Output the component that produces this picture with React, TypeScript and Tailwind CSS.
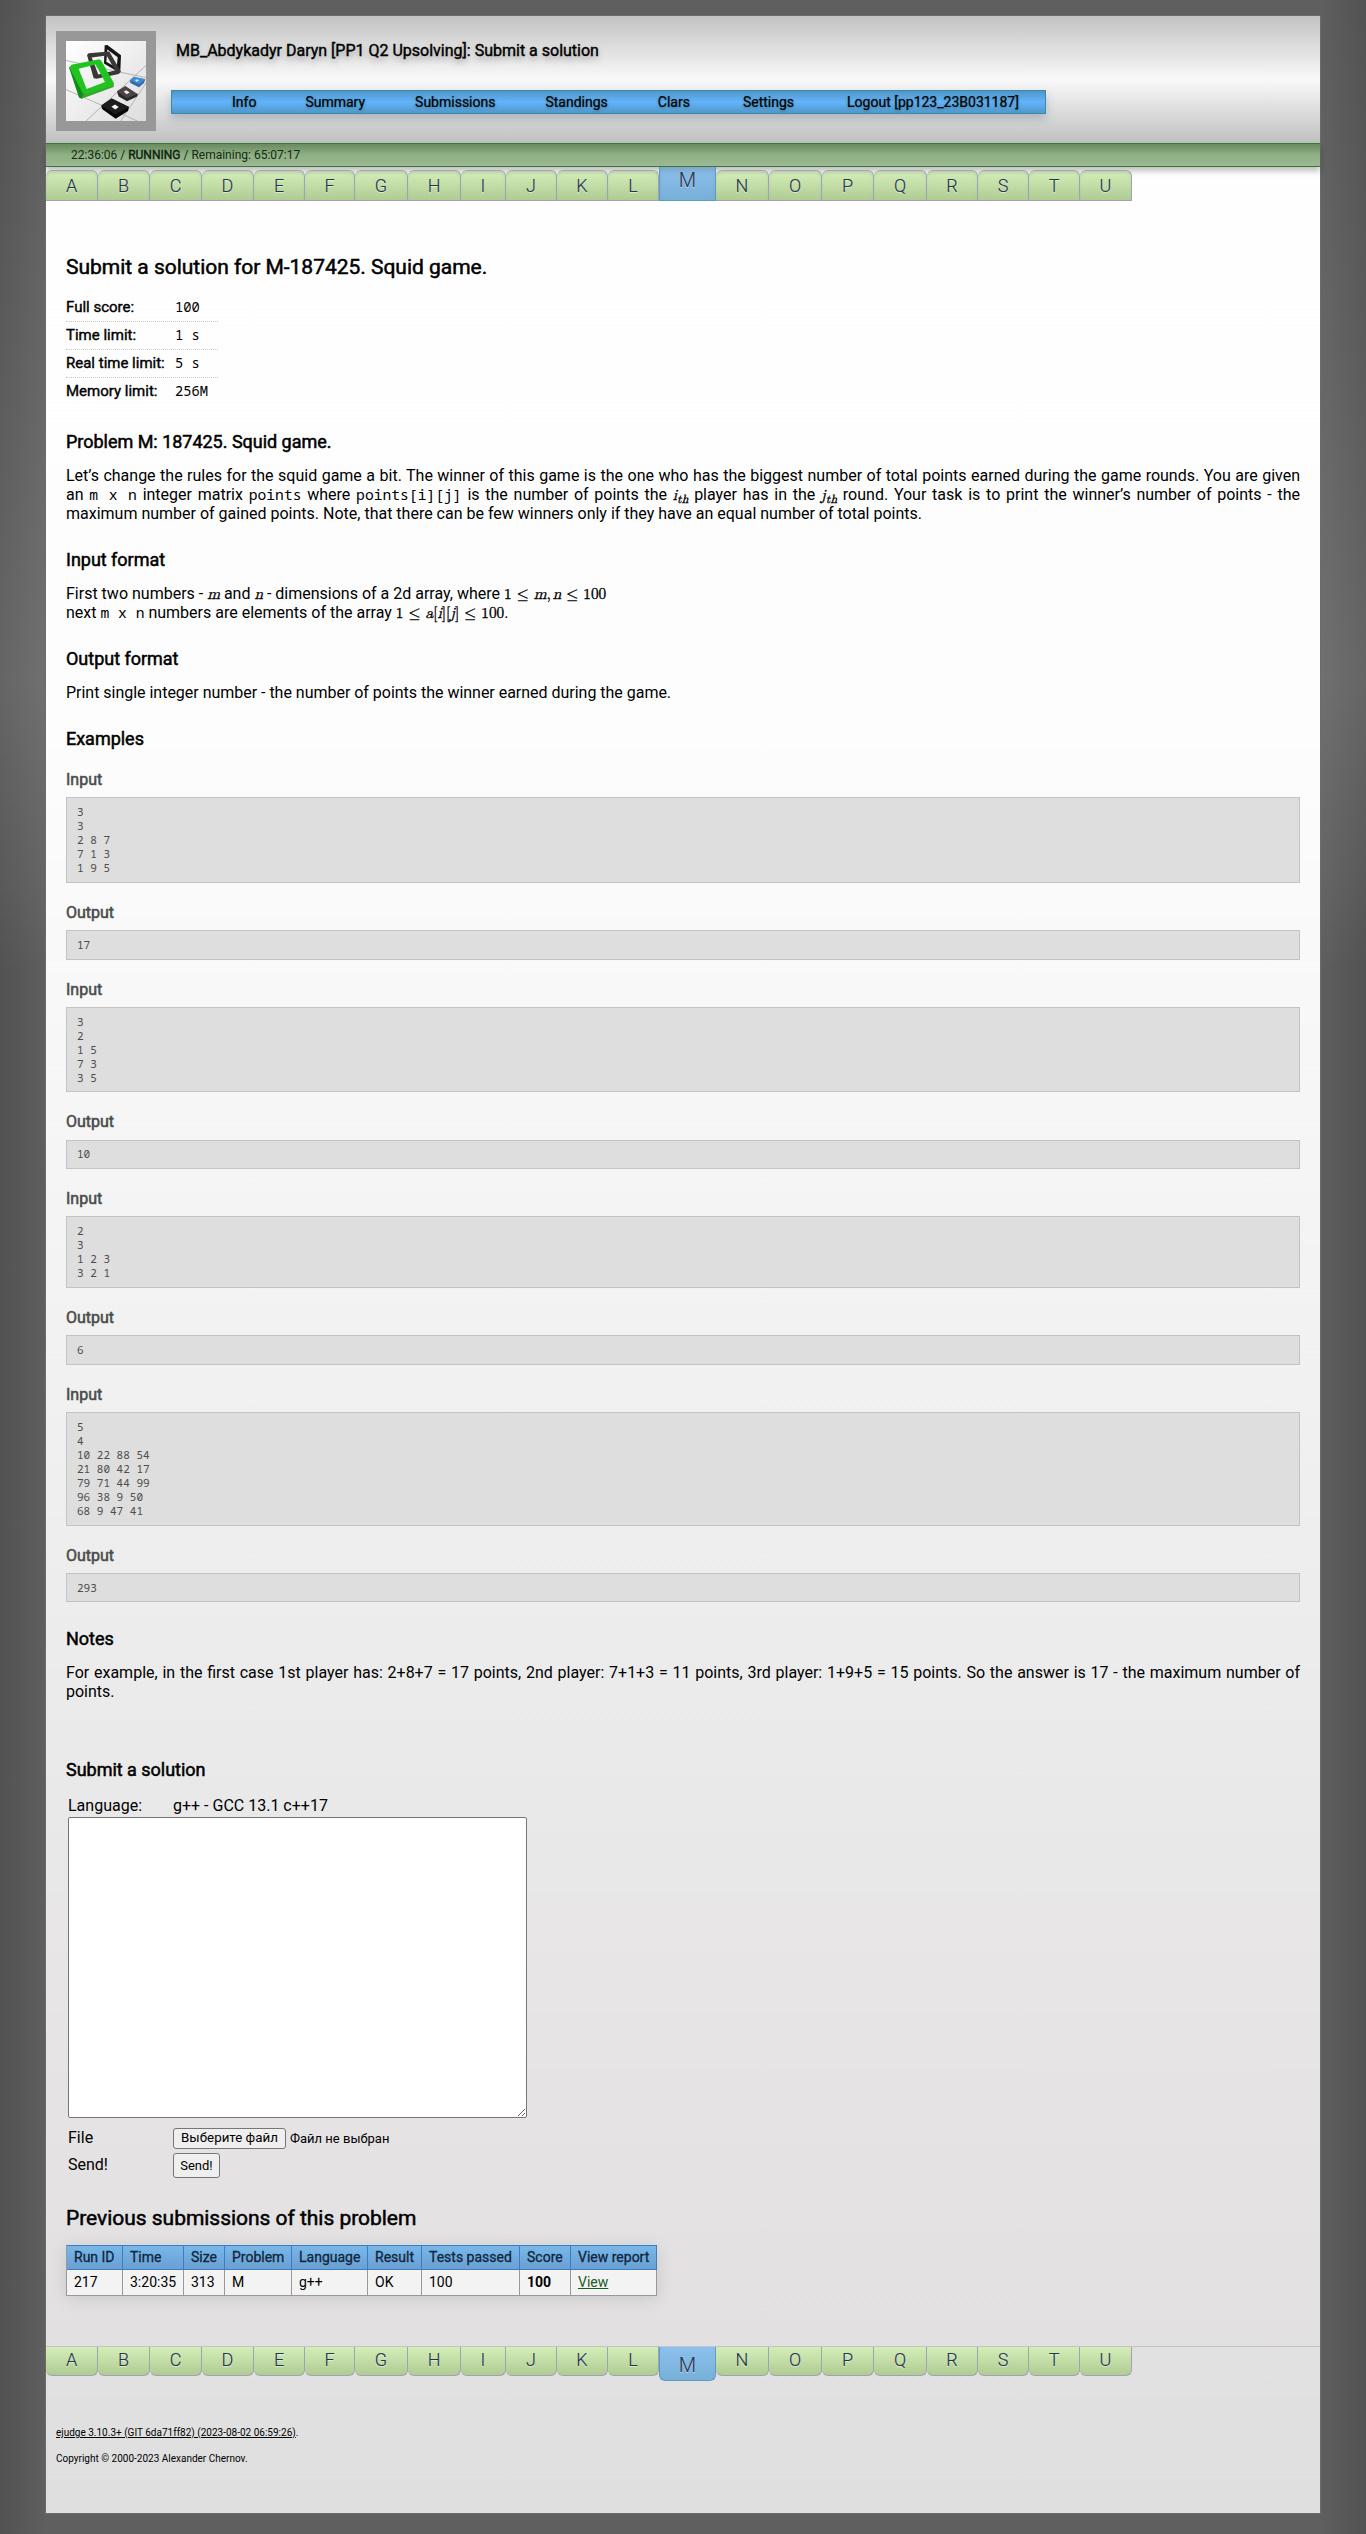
import type { ReactNode } from 'react';

const tabs: [string, string][] = [
  ['A', 'w-[52px]'], ['B', 'w-[52px]'], ['C', 'w-[52px]'], ['D', 'w-[52px]'], ['E', 'w-[51px]'],
  ['F', 'w-[50px]'], ['G', 'w-[53px]'], ['H', 'w-[53px]'], ['I', 'w-[45px]'], ['J', 'w-[51px]'],
  ['K', 'w-[51px]'], ['L', 'w-[51px]'], ['M', 'w-[57px]'], ['N', 'w-[53px]'], ['O', 'w-[53px]'],
  ['P', 'w-[52px]'], ['Q', 'w-[53px]'], ['R', 'w-[51px]'], ['S', 'w-[51px]'], ['T', 'w-[51px]'],
  ['U', 'w-[52px]'],
];

const menu: [string, string][] = [
  ['Info', 'ml-[60px]'], ['Summary', 'ml-[49px]'], ['Submissions', 'ml-[50px]'], ['Standings', 'ml-[50px]'],
  ['Clars', 'ml-[50px]'], ['Settings', 'ml-[53px]'], ['Logout [pp123_23B031187]', 'ml-[53px]'],
];

const limits = [
  ['Full score:', '100'],
  ['Time limit:', '1 s'],
  ['Real time limit:', '5 s'],
  ['Memory limit:', '256M'],
];

const examples = [
  ['3\n3\n2 8 7\n7 1 3\n1 9 5', '17'],
  ['3\n2\n1 5\n7 3\n3 5', '10'],
  ['2\n3\n1 2 3\n3 2 1', '6'],
  ['5\n4\n10 22 88 54\n21 80 42 17\n79 71 44 99\n96 38 9 50\n68 9 47 41', '293'],
];

const columns: [string, string, ReactNode][] = [
  ['Run ID', 'w-[56px]', '217'],
  ['Time', 'w-[61px]', '3:20:35'],
  ['Size', 'w-[41px]', '313'],
  ['Problem', 'w-[67px]', 'M'],
  ['Language', 'w-[76px]', 'g++'],
  ['Result', 'w-[54px]', 'OK'],
  ['Tests passed', 'w-[98px]', '100'],
  ['Score', 'w-[51px]', <b className="font-bold">100</b>],
  ['View report', 'w-[86px]', <a className="text-[#1a5c22] underline">View</a>],
];

function TabBar({ bottom = false }: { bottom?: boolean }) {
  return (
    <nav className={bottom ? 'flex h-[36px] items-start border-t border-[#c3c2c4]' : 'flex h-[34px] items-end'}>
      {tabs.map(([letter, width]) => {
        const active = letter === 'M';
        const base = active
          ? 'border border-[#5b9cc0] bg-linear-to-b from-[#8cc0ee] to-[#78b0d8] text-[20px] '
          : 'border-r border-[#9fa3b5] bg-linear-to-b from-[#d5eeb9] to-[#afcc93] text-[18px] ';
        const shape = bottom
          ? active
            ? 'h-[34px] rounded-b-[6px] border-t-0 pt-[3px] '
            : 'h-[29px] rounded-b-[6px] border-b pb-[2px] '
          : active
            ? 'h-[34px] border-t-0 pb-[8px] shadow-[inset_0_6px_6px_-3px_rgba(110,130,150,0.5)] '
            : 'h-[31px] rounded-t-[6px] border-y shadow-[inset_0_3px_3px_-1px_rgba(150,160,150,0.4)] ';
        return (
          <a
            key={letter}
            className={`flex shrink-0 items-center justify-center leading-none font-light text-[#26334f] [-webkit-text-stroke:0.15px_#26334f] [text-shadow:0_1px_1px_rgba(255,255,255,0.6)] ${base}${shape}${width}`}
          >
            {letter}
          </a>
        );
      })}
    </nav>
  );
}

function Logo() {
  return (
    <div className="size-[100px] bg-[#989898] p-[10px]">
      <svg viewBox="198 123 240 242" preserveAspectRatio="none" className="block size-[80px]">
        <defs>
          <linearGradient id="floor" x1="0" y1="0" x2="1" y2="1">
            <stop offset="0" stopColor="#fff" />
            <stop offset="1" stopColor="#ddd" />
          </linearGradient>
        </defs>
        <rect x="198" y="123" width="240" height="242" fill="url(#floor)" />
        <g stroke="#a9a9a9" strokeWidth="2.5" fill="none">
          <path d="M198 182L438 234M198 270L412 365M258 365L438 197M362 365L438 250" />
        </g>
        <path fillRule="evenodd" fill="#151515" d="M314 136L322 135L363 166L361 213L352 215L312 191ZM322 149L319 186L350 204L353 172Z" />
        <path fillRule="evenodd" fill="#3b3637" d="M261 165L266 160L328 155L363 216L356 223L290 237L281 236ZM275 173L295 224L345 212L320 167Z" />
        <path d="M207 203L217 196L256 285L245 298L237 294Z" fill="#0f8a14" />
        <path d="M245 298L251 282L341 250L341 262Z" fill="#3fa038" />
        <path fillRule="evenodd" fill="#21c321" d="M214 195L298 178L304 183L342 251L338 258L258 284L248 281L209 205ZM236 207L260 268L315 247L287 194Z" />
        <path d="M390 242L402 232L436 239L432 250L417 263L391 250Z" fill="#2a6cab" />
        <path d="M390 242L402 232L436 239L418 254Z" fill="#3f8cd3" />
        <path d="M405 241L412 239L417 243L409 246Z" fill="#dbe9f6" />
        <path d="M351 276L376 260L414 285L410 292L381 305L356 291Z" fill="#2b2728" />
        <path d="M351 275L376 260L412 283L380 296Z" fill="#4a4446" />
        <path d="M371 276L379 272L389 279L380 284Z" fill="#f0f0f0" />
        <path d="M304 318L335 297L387 323L384 335L347 358L306 329Z" fill="#070707" />
        <path d="M304 318L335 297L387 323L346 345Z" fill="#1c1c1c" />
        <path d="M334 322L345 315L356 323L346 330Z" fill="#f4f4f4" />
      </svg>
    </div>
  );
}

function Heading({ children, className = '' }: { children: ReactNode; className?: string }) {
  return (
    <h3 className={`text-[18px] leading-[22px] tracking-[-0.02px] [-webkit-text-stroke:0.5px_#000] ${className}`}>{children}</h3>
  );
}

function Code({ children }: { children: ReactNode }) {
  return (
    <code className="font-['Noto_Sans_Mono','DejaVu_Sans_Mono',monospace] text-[14.67px] leading-none">{children}</code>
  );
}

function Tex({ children }: { children: ReactNode }) {
  return (
    <span className="font-['Latin_Modern_Math','Liberation_Serif',serif] text-[15.3px] leading-none whitespace-nowrap text-black [-webkit-text-stroke:0.35px_#000]">
      {children}
    </span>
  );
}

function Sub() {
  return <sub className="relative bottom-auto top-[3px] align-baseline text-[12px] leading-none italic">th</sub>;
}

function Sample({ title, children }: { title: string; children: string }) {
  return (
    <>
      <h4 className="h-[47.3px] pt-[20px] text-[16px] leading-[20px] text-[#4d4d4d] [-webkit-text-stroke:0.55px_#4d4d4d]">
        {title}
      </h4>
      <pre className="border border-[#c3c3c3] bg-[#dedede] px-[10px] py-[6.75px] font-['Noto_Sans_Mono','DejaVu_Sans_Mono',monospace] text-[11px] leading-[14px] text-[#4d4d4d]">
        {children}
      </pre>
    </>
  );
}

export default function App() {
  return (
    <div className="h-[2534px] w-[1366px] bg-[linear-gradient(to_bottom,rgba(255,255,255,0)_0,rgba(255,255,255,0.05)_350px,rgba(255,255,255,0.11)_680px,rgba(255,255,255,0.04)_890px,rgba(255,255,255,0)_970px),linear-gradient(to_right,#525252,#5f5f5f_46px,#5f5f5f_1320px,#525252)] pt-[15px] font-['Roboto',sans-serif] text-black">
      <div className="mx-auto h-[2499px] w-[1276px] border border-[#6b6b6b] bg-[linear-gradient(to_bottom,#fefefe_0,#fdfdfd_700px,#f0f0f0_1420px,#e5e3e4_2080px,#e0dfe0_2497px)]">
        <header className="flex h-[127px] bg-linear-to-b from-[#c3c3c3] via-[#f9f9f9] to-[#c0c0c0] pt-[15px] pl-[10px]">
          <Logo />
          <div className="ml-[15px]">
            <h1 className="mt-[10px] ml-[5px] text-[16px] leading-[20px] [-webkit-text-stroke:0.4px_#000] [text-shadow:0_4px_6px_rgba(0,0,0,0.35)]">
              MB_Abdykadyr Daryn [PP1 Q2 Upsolving]: Submit a solution
            </h1>
            <nav className="mt-[29px] flex h-[24px] w-[875px] items-center border border-[#3f87a8] bg-linear-to-b from-[#5097c8] via-[#63b4fc] to-[#5098ca] text-[14px] leading-none whitespace-nowrap shadow-[0_5px_8px_rgba(90,120,140,0.35)] [text-shadow:0_1px_3px_rgba(20,50,20,0.45)]">
              {menu.map(([label, gap]) => (
                <a key={label} className={`[-webkit-text-stroke:0.2px_#000] ${gap}`}>{label}</a>
              ))}
            </nav>
          </div>
        </header>
        <div className="flex h-[24px] items-center border-y border-[#39793a] bg-linear-to-b from-[#6b8a5f] via-[#8db184] to-[#9db893] pl-[25px] text-[12px] leading-none whitespace-pre text-[#162816] shadow-[0_4px_6px_rgba(0,0,0,0.25)]">
          22:36:06 / <b className="font-normal [-webkit-text-stroke:0.4px_#0a180a]">RUNNING</b> / Remaining: 65:07:17
        </div>
        <TabBar />

        <main className="h-[2145px] px-[20px] pt-[54px]">
          <h2 className="text-[21px] leading-[24px] tracking-[-0.02px] [-webkit-text-stroke:0.5px_#000]">
            Submit a solution for M-187425. Squid game.
          </h2>
          <div className="mt-[15px] h-[112px] w-[152px]">
            {limits.map(([label, value]) => (
              <div key={label} className="flex h-[28px] items-center border-b border-dotted border-[#c8c8c8] last:border-transparent">
                <span className="w-[109px] text-[15px] leading-none whitespace-nowrap [-webkit-text-stroke:0.4px_#000]">{label}</span>
                <span className="pb-[2px] font-['Noto_Sans_Mono','DejaVu_Sans_Mono',monospace] text-[13.75px] leading-none">{value}</span>
              </div>
            ))}
          </div>

          <Heading className="mt-[25px]">Problem M: 187425. Squid game.</Heading>
          <p className="mt-[13px] h-[57px] text-justify text-[16px] leading-[19px]">
            Let’s change the rules for the squid game a bit. The winner of this game is the one who has the biggest number
            of total points earned during the game rounds. You are given an <Code>m x n</Code> integer matrix{' '}
            <Code>points</Code> where <Code>points[i][j]</Code> is the number of points the{' '}
            <Tex><i>i</i><Sub /></Tex> player has in the <Tex><i>j</i><Sub /></Tex> round. Your task is to print the
            winner’s number of points - the maximum number of gained points. Note, that there can be few winners only if
            they have an equal number of total points.
          </p>

          <Heading className="mt-[26px]">Input format</Heading>
          <p className="mt-[13px] h-[38px] text-[16px] leading-[19px]">
            First two numbers - <Tex><i>m</i></Tex> and <Tex><i>n</i></Tex> - dimensions of a 2d array, where{' '}
            <Tex>1 ≤ <i>m</i>,<i className="ml-[2px]">n</i> ≤ 100</Tex>
            <br />
            next <Code>m x n</Code> numbers are elements of the array{' '}
            <Tex>1 ≤ <i>a</i>[<i>i</i>][<i>j</i>] ≤ 100</Tex>.
          </p>

          <Heading className="mt-[26px]">Output format</Heading>
          <p className="mt-[13px] h-[19px] text-[16px] leading-[19px] tracking-[-0.02px]">
            Print single integer number - the number of points the winner earned during the game.
          </p>

          <Heading className="mt-[26px]">Examples</Heading>
          {examples.map(([input, output]) => (
            <div key={input}>
              <Sample title="Input">{input}</Sample>
              <Sample title="Output">{output}</Sample>
            </div>
          ))}

          <Heading className="mt-[25.2px]">Notes</Heading>
          <p className="mt-[13px] h-[38px] text-justify text-[16px] leading-[19px]">
            For example, in the first case 1st player has: 2+8+7 = 17 points, 2nd player: 7+1+3 = 11 points, 3rd player:
            1+9+5 = 15 points. So the answer is 17 - the maximum number of points.
          </p>

          <Heading className="mt-[58px]">Submit a solution</Heading>
          <div className="mt-[15px] ml-[2px] text-[16px] leading-[20px]">
            <div className="flex h-[21px]">
              <span className="w-[105px]">Language:</span>
              <span>g++ - GCC 13.1 c++17</span>
            </div>
            <textarea className="block h-[301px] w-[459px] resize rounded-[2px] border border-[#767676] bg-white" />
            <div className="mt-[10px] flex h-[21px] items-center">
              <span className="w-[105px]">File</span>
              <button className="h-[21px] w-[113px] rounded-[3px] border border-[#767676] bg-[#efefef] text-[13.33px] leading-none whitespace-nowrap">
                Выберите файл
              </button>
              <span className="ml-[4px] text-[13px] leading-none">Файл не выбран</span>
            </div>
            <div className="mt-[4px] flex h-[25px] items-center">
              <span className="w-[105px]">Send!</span>
              <button className="h-[25px] w-[47px] rounded-[3px] border border-[#767676] bg-[#efefef] text-[13px] leading-none">
                Send!
              </button>
            </div>
          </div>

          <h2 className="mt-[28px] text-[21px] leading-[24px] tracking-[-0.03px] [-webkit-text-stroke:0.5px_#000]">
            Previous submissions of this problem
          </h2>
          <div className="mt-[15px] flex h-[51px] w-[591px] border-l border-[#999] text-[14px] leading-none whitespace-nowrap shadow-[0_2px_16px_rgba(0,0,0,0.12)]">
            {columns.map(([title, width, value]) => (
              <div key={title} className={`flex shrink-0 grow flex-col ${width}`}>
                <div className="flex h-[25px] items-center border-t border-r border-b border-[#3d7cc0] bg-linear-to-b from-[#79b8ea] to-[#6a9fd2] pl-[7px] text-[#10263c] [-webkit-text-stroke:0.3px_#10263c]">
                  {title}
                </div>
                <div className="flex h-[26px] items-center border-r border-b border-[#999] bg-[#f4f3f4] pl-[7px]">
                  {value}
                </div>
              </div>
            ))}
          </div>
        </main>

        <TabBar bottom />
        <footer className="pt-[44px] pl-[10px] text-[10px] leading-[14px]">
          <p><a className="underline">ejudge 3.10.3+ (GIT 6da71ff82) (2023-08-02 06:59:26)</a>.</p>
          <p className="mt-[12px]">Copyright © 2000-2023 Alexander Chernov.</p>
        </footer>
      </div>
    </div>
  );
}
